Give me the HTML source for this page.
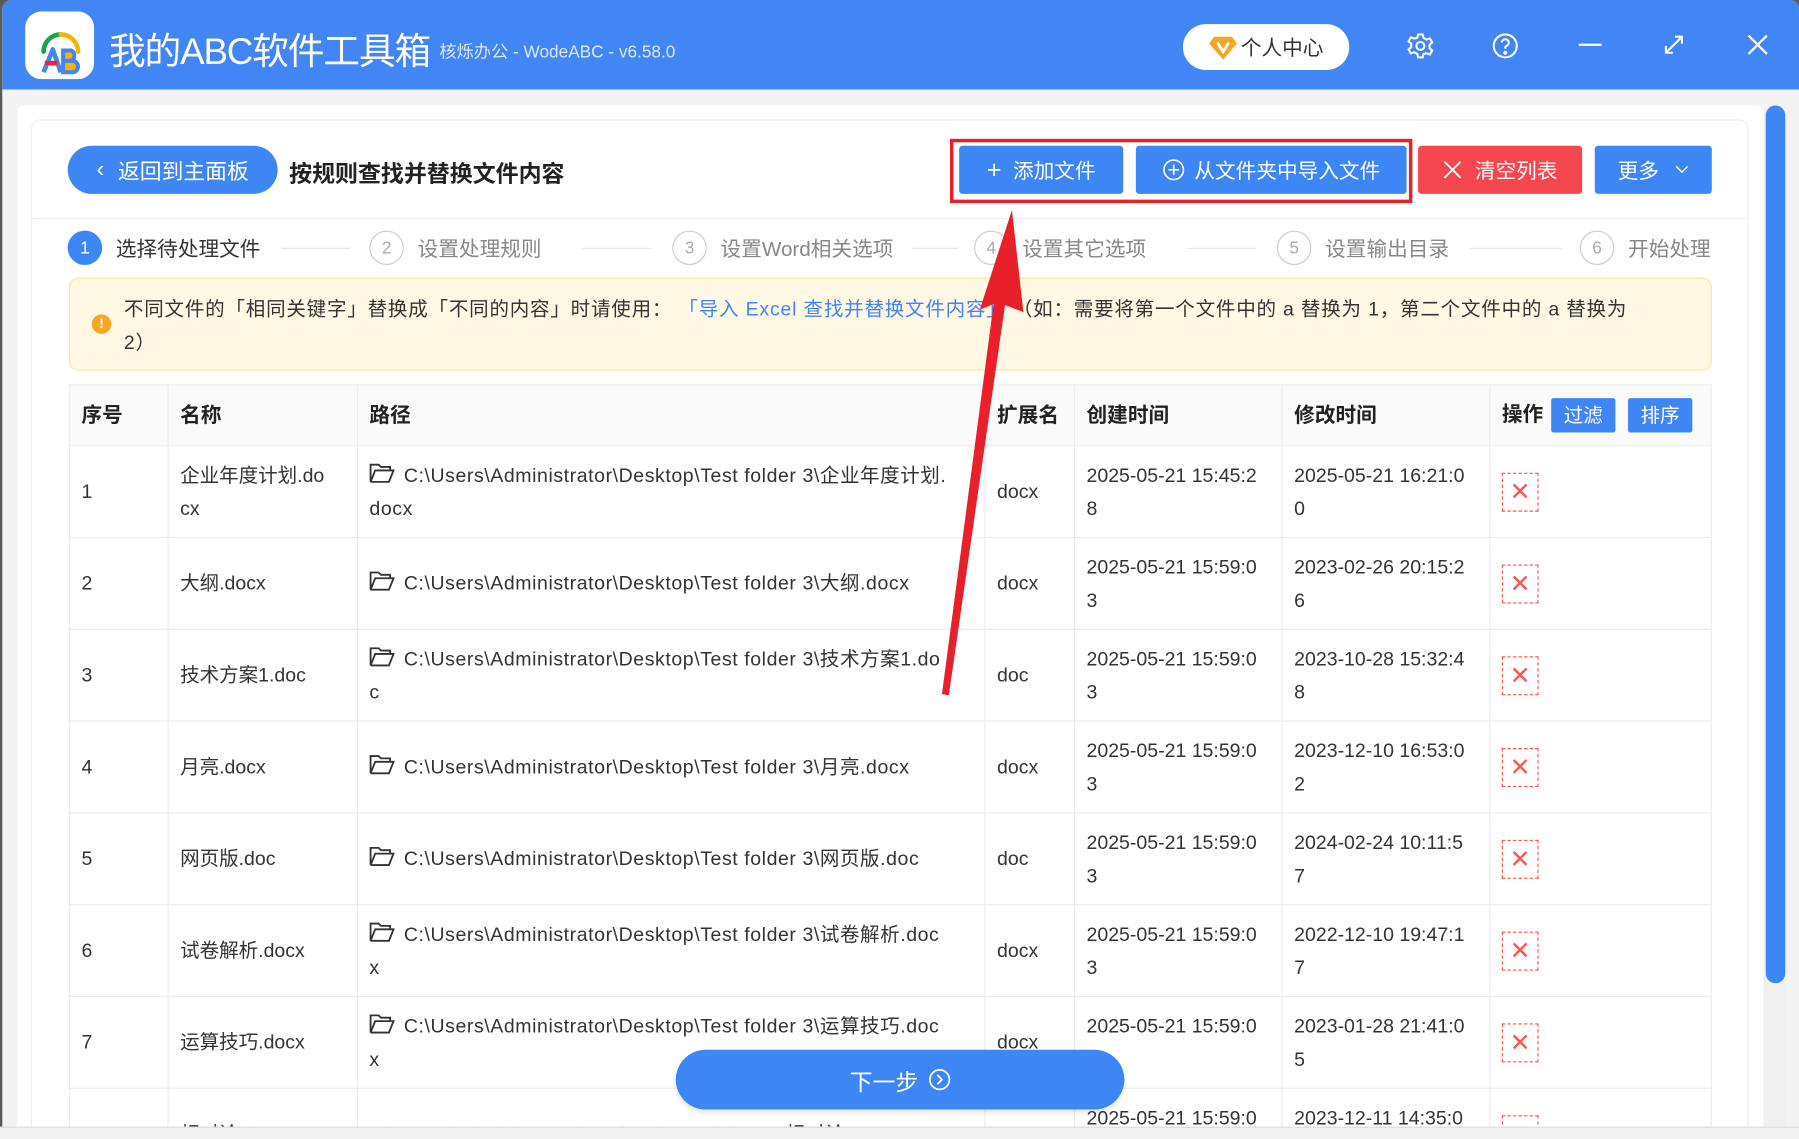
<!DOCTYPE html>
<html><head><meta charset="utf-8"><style>
*{box-sizing:border-box;margin:0;padding:0}
html,body{width:1799px;height:1139px;overflow:hidden;background:#5a5a5a}
#w{position:absolute;left:0;top:0;width:1568px;height:993px;transform:scale(1.14732);transform-origin:0 0;font-family:"Liberation Sans","Noto Sans CJK SC",sans-serif;color:#333;overflow:hidden}
.a{position:absolute}
#win{left:2px;top:0;width:1566px;height:993px;background:#f3f3f3;border-radius:8px 8px 0 0;overflow:hidden}
#tb{left:0;top:0;width:1566px;height:78px;background:#4285f4}
.btn{position:absolute;color:#fff;font-size:18px;display:flex;align-items:center;justify-content:center;border-radius:3px}
.step{position:absolute;top:201px;height:30px;display:flex;align-items:center;font-size:18px;color:#888}
.c{width:30px;height:30px;border-radius:50%;border:1.5px solid #ccc;color:#aaa;font-size:15px;display:flex;align-items:center;justify-content:center;margin-right:12px;background:#fff}
.ln{position:absolute;top:216px;height:1px;background:#e5e5e5}
table{position:absolute;left:60px;top:335px;width:1431px;border-collapse:collapse;font-size:17px;table-layout:fixed}
td,th{border:1px solid #ececec;padding:0 10px;line-height:29px;text-align:left;vertical-align:middle;white-space:nowrap;overflow:hidden;color:#333}
th{height:53px;background:#fafafa;font-weight:bold;font-size:18px;color:#222}
td{height:80px;background:#fff}
td.p{letter-spacing:0.5px}
.del{width:32px;height:34px;border:1.5px dashed #f55;color:#f55;display:flex;align-items:center;justify-content:center;font-size:22px;line-height:1}
.fo{display:inline-block;vertical-align:-2px;margin-right:8px}
.sb{display:inline-flex;align-items:center;justify-content:center;width:56px;height:30px;background:#3f86f5;color:#fff;font-size:17px;font-weight:normal;border-radius:2px;margin-left:7px;vertical-align:middle}
</style></head><body><div id="w">
<div id="win" class="a">
<div id="tb" class="a"></div>
<div class="a" style="left:20px;top:10px;width:60px;height:59px;background:#fff;border-radius:14px"></div>
<svg class="a" style="left:20px;top:10px" width="60" height="59" viewBox="0 0 60 59">
<path d="M16 35 A15 15 0 0 1 31 20" stroke="#1aa34a" stroke-width="4" fill="none" stroke-linecap="round"/>
<path d="M31 20 A15 15 0 0 1 46 35" stroke="#f4b400" stroke-width="4" fill="none" stroke-linecap="round"/>
<path d="M16 53 L24 33 L31 53" stroke="#4285f4" stroke-width="4" fill="none" stroke-linejoin="round"/>
<path d="M17 45 H28" stroke="#e8262b" stroke-width="4"/>
<path d="M33 34 H40 a5 5 0 0 1 0 9 H33 Z M33 43 H41 a5 5 0 0 1 0 10 H33 Z" stroke="#4285f4" stroke-width="3.5" fill="#f4b400"/>
</svg>
<div class="a" style="left:93px;top:20px;font-size:32px;color:#fff;letter-spacing:-1px">我的ABC软件工具箱</div>
<div class="a" style="left:381px;top:34px;font-size:15px;color:#dce8fd">核烁办公 - WodeABC - v6.58.0</div>
<div class="a" style="left:1029px;top:21px;width:145px;height:40px;background:#fff;border-radius:20px;display:flex;align-items:center;justify-content:center;font-size:18px;color:#333"><svg width="24" height="22" viewBox="0 0 24 22" style="margin-right:4px"><path d="M4 2h16l4 6-12 14L0 8z" fill="#f5a623"/><path d="M7 7l5 8 5-8" stroke="#fff" stroke-width="2.5" fill="none"/></svg>个人中心</div>
<svg class="a" style="left:1224px;top:28px" width="24" height="24" viewBox="0 0 24 24" fill="none" stroke="#fff" stroke-width="1.8"><circle cx="12" cy="12" r="3.5"/><path d="M10 2h4l.7 3 2.6 1.5 3-1 2 3.4-2.3 2.1v3l2.3 2.1-2 3.4-3-1L14.7 19 14 22h-4l-.7-3-2.6-1.5-3 1-2-3.4L4 13v-3L1.7 8l2-3.4 3 1L9.3 5z"/></svg>
<svg class="a" style="left:1298px;top:28px" width="24" height="24" viewBox="0 0 24 24" fill="none" stroke="#fff" stroke-width="1.8"><circle cx="12" cy="12" r="10"/><path d="M9 9a3 3 0 1 1 4 3c-1 .5-1 1-1 2.5"/><circle cx="12" cy="18" r=".8" fill="#fff"/></svg>
<div class="a" style="left:1374px;top:38px;width:20px;height:2px;background:#fff"></div>
<svg class="a" style="left:1447px;top:29px" width="20" height="20" viewBox="0 0 20 20" stroke="#fff" stroke-width="1.8" fill="none"><path d="M3 17L17 3M11 3h6v6M3 11v6h6"/></svg>
<svg class="a" style="left:1521px;top:30px" width="18" height="18" viewBox="0 0 18 18" stroke="#fff" stroke-width="2"><path d="M1 1L17 17M17 1L1 17"/></svg>
<div class="a" style="left:13px;top:92px;width:1522px;height:900px;background:#fff;border-radius:6px 6px 0 0"></div>
<div class="a" style="left:25px;top:104px;width:1497px;height:890px;border:1px solid #eee;border-radius:8px;background:#fff"></div>
<div class="a" style="left:1535px;top:92px;width:20px;height:894px;background:#f0f0f0;border-radius:10px"></div>
<div class="a" style="left:1537px;top:92px;width:17px;height:765px;background:#3f86f5;border-radius:9px"></div>
</div>
<div class="btn" style="left:59px;top:127px;width:183px;height:42px;border-radius:21px;background:#3f86f5;font-size:19px"><span style="margin-right:12px;font-size:20px">&#8249;</span>返回到主面板</div>
<div class="a" style="left:252px;top:135px;font-size:20px;font-weight:bold;color:#222">按规则查找并替换文件内容</div>
<div class="a" style="left:828px;top:121px;width:403px;height:56px;border:3px solid #e8202a"></div>
<div class="btn" style="left:836px;top:127px;width:143px;height:42px;background:#3f86f5"><span style="font-size:22px;margin-right:10px;font-weight:300">+</span>添加文件</div>
<div class="btn" style="left:990px;top:127px;width:236px;height:42px;background:#3f86f5"><svg width="20" height="20" viewBox="0 0 20 20" style="margin-right:8px" stroke="#fff" fill="none" stroke-width="1.4"><circle cx="10" cy="10" r="8.5"/><path d="M10 5.5v9M5.5 10h9"/></svg>从文件夹中导入文件</div>
<div class="btn" style="left:1236px;top:127px;width:143px;height:42px;background:#f5474f"><svg width="16" height="16" viewBox="0 0 16 16" style="margin-right:12px" stroke="#fff" stroke-width="1.6"><path d="M1 1L15 15M15 1L1 15"/></svg>清空列表</div>
<div class="btn" style="left:1390px;top:127px;width:102px;height:42px;background:#3f86f5">更多<svg width="12" height="8" viewBox="0 0 12 8" style="margin-left:14px" stroke="#fff" fill="none" stroke-width="1.3"><path d="M1 1l5 5 5-5"/></svg></div>
<div class="a" style="left:27px;top:190px;width:1495px;height:1px;background:#eee"></div>
<div class="step" style="left:59px;color:#333"><div class="c" style="background:#3f86f5;border-color:#3f86f5;color:#fff">1</div>选择待处理文件</div>
<div class="ln" style="left:245px;width:60px"></div>
<div class="step" style="left:322px"><div class="c">2</div>设置处理规则</div>
<div class="ln" style="left:508px;width:60px"></div>
<div class="step" style="left:586px"><div class="c">3</div>设置Word相关选项</div>
<div class="ln" style="left:795px;width:40px"></div>
<div class="step" style="left:849px"><div class="c">4</div>设置其它选项</div>
<div class="ln" style="left:1035px;width:60px"></div>
<div class="step" style="left:1113px"><div class="c">5</div>设置输出目录</div>
<div class="ln" style="left:1281px;width:80px"></div>
<div class="step" style="left:1377px"><div class="c">6</div>开始处理</div>
<div class="a" style="left:60px;top:242px;width:1432px;height:81px;background:#fff8e5;border:1px solid #fde49c;border-radius:8px"></div>
<div class="a" style="left:80px;top:274px;width:17px;height:17px;border-radius:50%;background:#f5a623;color:#fff;font-size:12px;font-weight:bold;text-align:center;line-height:17px">!</div>
<div class="a" style="left:108px;top:255px;width:1370px;font-size:17px;line-height:29px;color:#333;white-space:nowrap;letter-spacing:0.7px">不同文件的「相同关键字」替换成「不同的内容」时请使用： <span style="color:#3f86f5">「导入 Excel 查找并替换文件内容」</span> （如：需要将第一个文件中的 a 替换为 1，第二个文件中的 a 替换为<br>2）</div>
<table>
<colgroup><col style="width:86px"><col style="width:165px"><col style="width:547px"><col style="width:78px"><col style="width:181px"><col style="width:181px"><col style="width:193px"></colgroup>
<tr><th>序号</th><th>名称</th><th>路径</th><th style="padding:0 10px">扩展名</th><th>创建时间</th><th>修改时间</th><th>操作<span class="sb">过滤</span><span class="sb" style="margin-left:11px">排序</span></th></tr>
<tr><td>1</td><td>企业年度计划.do<br>cx</td><td class="p"><svg class="fo" width="22" height="18" viewBox="0 0 22 18" fill="none" stroke="#333" stroke-width="1.6"><path d="M1 1h7l2 2h8v3H5L1 16V1zM5 6h16l-4 10H1"/></svg>C:\Users\Administrator\Desktop\Test folder 3\企业年度计划.<br>docx</td><td>docx</td><td>2025-05-21 15:45:2<br>8</td><td>2025-05-21 16:21:0<br>0</td><td><div class="del">✕</div></td></tr>
<tr><td>2</td><td>大纲.docx</td><td class="p"><svg class="fo" width="22" height="18" viewBox="0 0 22 18" fill="none" stroke="#333" stroke-width="1.6"><path d="M1 1h7l2 2h8v3H5L1 16V1zM5 6h16l-4 10H1"/></svg>C:\Users\Administrator\Desktop\Test folder 3\大纲.docx</td><td>docx</td><td>2025-05-21 15:59:0<br>3</td><td>2023-02-26 20:15:2<br>6</td><td><div class="del">✕</div></td></tr>
<tr><td>3</td><td>技术方案1.doc</td><td class="p"><svg class="fo" width="22" height="18" viewBox="0 0 22 18" fill="none" stroke="#333" stroke-width="1.6"><path d="M1 1h7l2 2h8v3H5L1 16V1zM5 6h16l-4 10H1"/></svg>C:\Users\Administrator\Desktop\Test folder 3\技术方案1.do<br>c</td><td>doc</td><td>2025-05-21 15:59:0<br>3</td><td>2023-10-28 15:32:4<br>8</td><td><div class="del">✕</div></td></tr>
<tr><td>4</td><td>月亮.docx</td><td class="p"><svg class="fo" width="22" height="18" viewBox="0 0 22 18" fill="none" stroke="#333" stroke-width="1.6"><path d="M1 1h7l2 2h8v3H5L1 16V1zM5 6h16l-4 10H1"/></svg>C:\Users\Administrator\Desktop\Test folder 3\月亮.docx</td><td>docx</td><td>2025-05-21 15:59:0<br>3</td><td>2023-12-10 16:53:0<br>2</td><td><div class="del">✕</div></td></tr>
<tr><td>5</td><td>网页版.doc</td><td class="p"><svg class="fo" width="22" height="18" viewBox="0 0 22 18" fill="none" stroke="#333" stroke-width="1.6"><path d="M1 1h7l2 2h8v3H5L1 16V1zM5 6h16l-4 10H1"/></svg>C:\Users\Administrator\Desktop\Test folder 3\网页版.doc</td><td>doc</td><td>2025-05-21 15:59:0<br>3</td><td>2024-02-24 10:11:5<br>7</td><td><div class="del">✕</div></td></tr>
<tr><td>6</td><td>试卷解析.docx</td><td class="p"><svg class="fo" width="22" height="18" viewBox="0 0 22 18" fill="none" stroke="#333" stroke-width="1.6"><path d="M1 1h7l2 2h8v3H5L1 16V1zM5 6h16l-4 10H1"/></svg>C:\Users\Administrator\Desktop\Test folder 3\试卷解析.doc<br>x</td><td>docx</td><td>2025-05-21 15:59:0<br>3</td><td>2022-12-10 19:47:1<br>7</td><td><div class="del">✕</div></td></tr>
<tr><td>7</td><td>运算技巧.docx</td><td class="p"><svg class="fo" width="22" height="18" viewBox="0 0 22 18" fill="none" stroke="#333" stroke-width="1.6"><path d="M1 1h7l2 2h8v3H5L1 16V1zM5 6h16l-4 10H1"/></svg>C:\Users\Administrator\Desktop\Test folder 3\运算技巧.doc<br>x</td><td>docx</td><td>2025-05-21 15:59:0<br>5</td><td>2023-01-28 21:41:0<br>5</td><td><div class="del">✕</div></td></tr>
<tr><td>8</td><td>相对论.docx</td><td class="p">C:\Users\Administrator\Desktop\Test folder 3\相对论.docx</td><td>docx</td><td>2025-05-21 15:59:0<br>3</td><td>2023-12-11 14:35:0<br>1</td><td><div class="del">✕</div></td></tr>
</table>
<svg class="a" style="left:0;top:0" width="1568" height="993"><polygon points="882,183 854,270 866,265 821,605 827,606 876,266 892,272" fill="#e8202a"/></svg>
<div class="btn" style="left:589px;top:915px;width:391px;height:52px;border-radius:26px;background:#3f86f5;font-size:20px;box-shadow:0 3px 4px rgba(0,0,0,.1)">下一步<svg width="20" height="20" viewBox="0 0 20 20" style="margin-left:8px" fill="none" stroke="#fff" stroke-width="1.5"><circle cx="10" cy="10" r="8.5"/><path d="M8 6l4 4-4 4"/></svg></div>
<div class="a" style="left:0;top:982px;width:1568px;height:11px;background:#f2f2f2;border-top:1px solid #ddd"></div>
</div></body></html>
